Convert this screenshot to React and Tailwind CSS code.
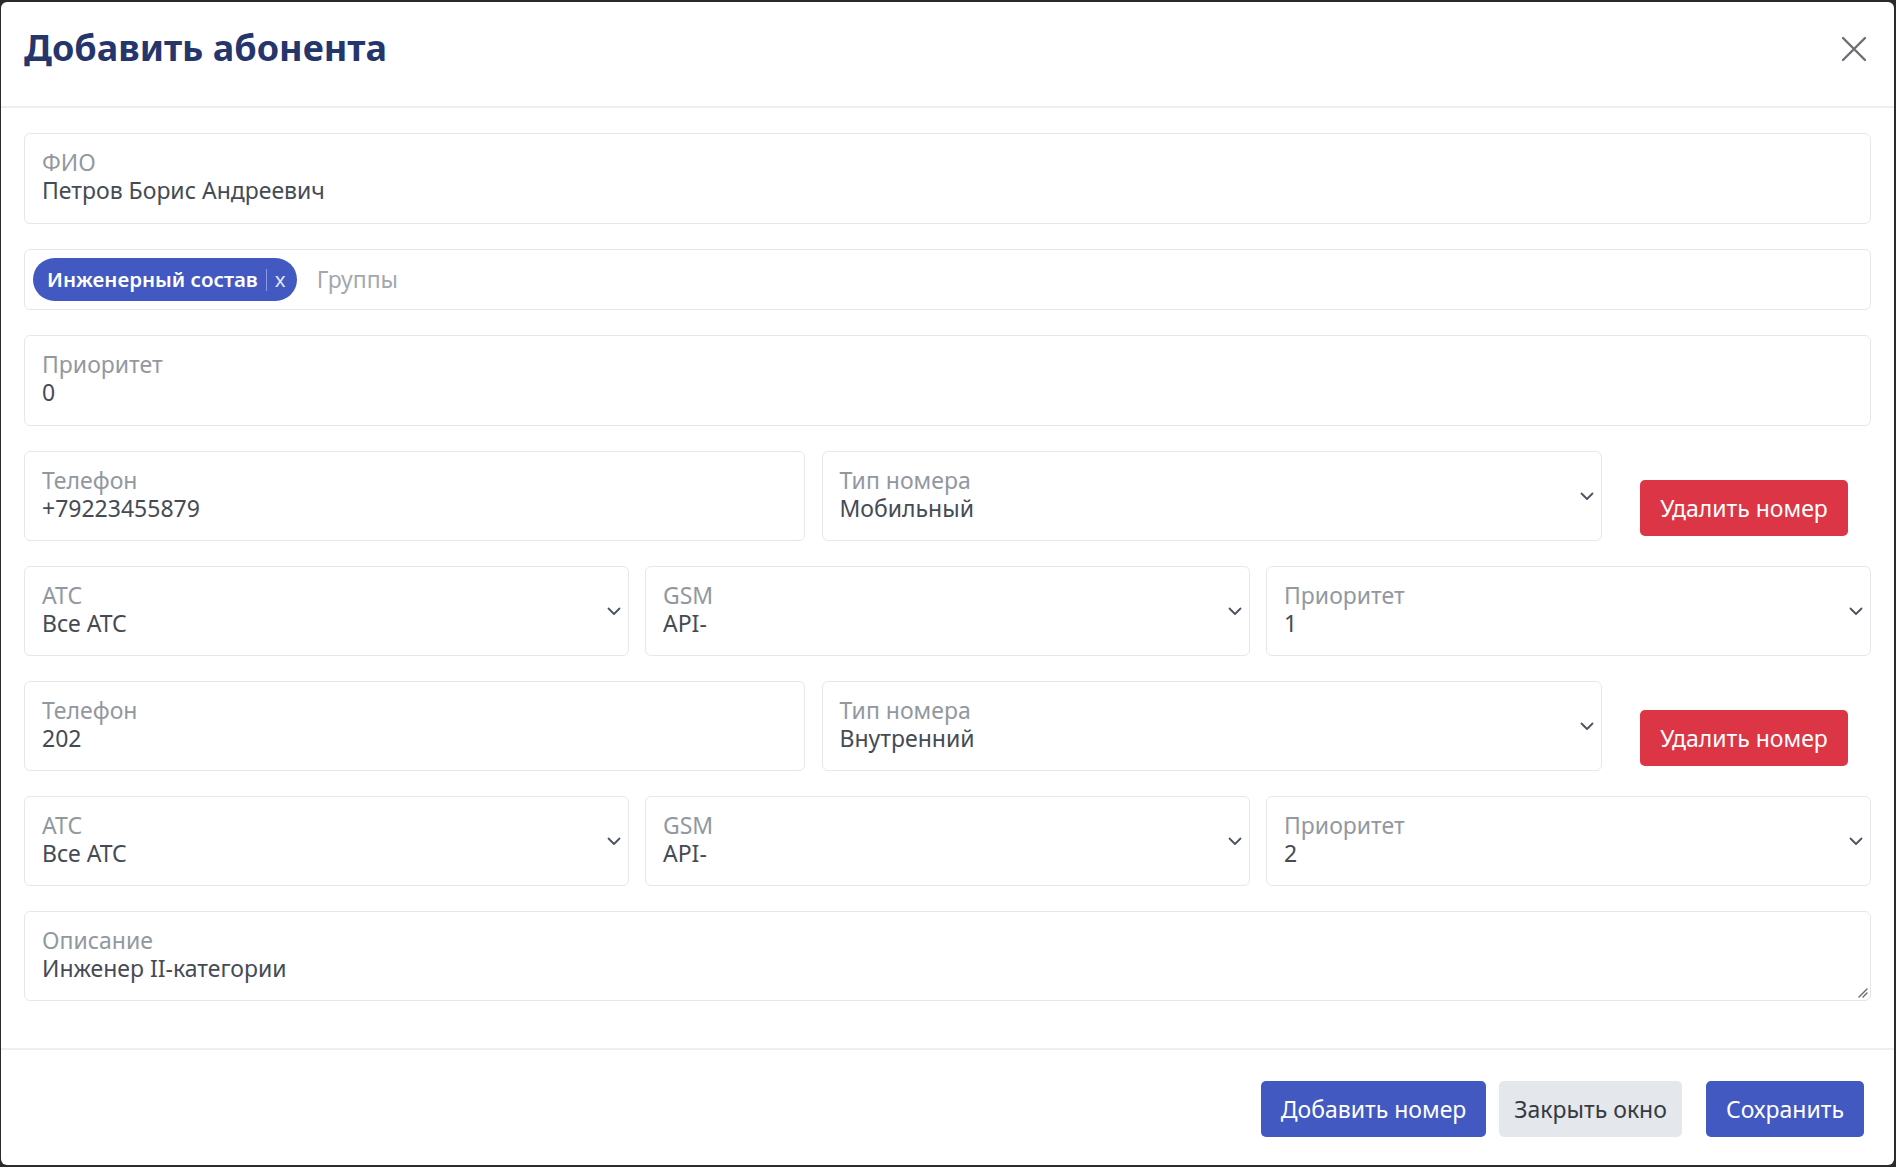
import React from "react";

const font = { fontFamily: '"Noto Sans", "Open Sans", sans-serif' };

function Chevron() {
  return (
    <svg width="14" height="9" viewBox="0 0 14 9" fill="none" className="shrink-0">
      <path d="M1.5 1.5 L7 7 L12.5 1.5" stroke="#4b5260" strokeWidth="1.8" strokeLinecap="round" strokeLinejoin="round" />
    </svg>
  );
}

function Field({ label, value, select = false, className = "h-[90px]" }) {
  return (
    <div className={`relative rounded-[6px] border border-[#e4e8ee] bg-white pl-[17px] pr-[7px] pt-[14px] flex items-start ${className}`}>
      <div className="flex-1 min-w-0 text-[23px] leading-[28px]">
        <div className="text-[#9298a0]">{label}</div>
        <div className="text-[#454b55]">{value}</div>
      </div>
      {select && (
        <div className="self-center -mt-[14px]">
          <Chevron />
        </div>
      )}
    </div>
  );
}

function PhoneBlock({ phone, type, priority }) {
  return (
    <>
      <div className="flex">
        <div className="flex flex-1 gap-[17px]">
          <Field label="Телефон" value={phone} className="h-[90px] flex-1" />
          <Field label="Тип номера" value={type} select className="h-[90px] flex-1" />
        </div>
        <div className="w-[269px] pl-[38px] pt-[29px]">
          <button className="h-[56px] w-[208px] rounded-[5px] bg-[#dc3545] text-[23px] text-white">
            Удалить номер
          </button>
        </div>
      </div>
      <div className="grid grid-cols-3 gap-[16px]">
        <Field label="АТС" value="Все АТС" select />
        <Field label="GSM" value="API-" select />
        <Field label="Приоритет" value={priority} select />
      </div>
    </>
  );
}

export default function App() {
  return (
    <div className="min-h-screen bg-[#2b2b2b] p-[2px] pl-[1px]" style={font}>
      <div className="flex h-[1163px] flex-col rounded-[6px] bg-white">
        {/* Header */}
        <div className="flex h-[106px] items-start justify-between border-b-2 border-[#eceef1] px-[23px] pt-[20px]">
          <h1 className="text-[36px] font-bold leading-[52px] text-[#25366c]">Добавить абонента</h1>
          <button className="mt-[14px] mr-[4px] text-[#6b6f75]">
            <svg width="26" height="26" viewBox="0 0 26 26" fill="none">
              <path d="M2 2 L24 24 M24 2 L2 24" stroke="currentColor" strokeWidth="2.4" strokeLinecap="round" />
            </svg>
          </button>
        </div>

        {/* Body */}
        <div className="flex flex-1 flex-col gap-[25px] border-b-2 border-[#eceef1] px-[23px] pt-[25px]">
          <Field label="ФИО" value="Петров Борис Андреевич" className="h-[91px]" />

          <div className="flex h-[61px] items-center gap-[20px] rounded-[6px] border border-[#e4e8ee] px-[8px]">
            <div className="flex h-[43px] items-center rounded-full bg-[#4259c1] pl-[14px] pr-[11px] text-[20.5px] font-semibold text-white">
              <span>Инженерный состав</span>
              <span className="mx-[8px] h-[22px] w-px bg-[#8d9be0]" />
              <span className="font-normal text-[#e3e7f8]">x</span>
            </div>
            <span className="text-[23px] text-[#a3a8ae]">Группы</span>
          </div>

          <Field label="Приоритет" value="0" className="h-[91px]" />

          <PhoneBlock phone="+79223455879" type="Мобильный" priority="1" />
          <PhoneBlock phone="202" type="Внутренний" priority="2" />

          <div className="relative">
            <Field label="Описание" value="Инженер II-категории" />
            <svg width="12" height="12" viewBox="0 0 12 12" className="absolute bottom-[3px] right-[3px]">
              <path d="M11 3 L3 11 M11 7 L7 11" stroke="#666" strokeWidth="1.3" strokeLinecap="round" />
            </svg>
          </div>
        </div>

        {/* Footer */}
        <div className="flex h-[115px] items-start justify-end pr-[30px] pt-[31px] text-[23px]">
          <button className="h-[56px] rounded-[5px] bg-[#4259c1] px-[20px] text-white">Добавить номер</button>
          <button className="ml-[13px] h-[56px] rounded-[5px] bg-[#e4e7eb] px-[15px] text-[#353a40]">Закрыть окно</button>
          <button className="ml-[24px] h-[56px] rounded-[5px] bg-[#4259c1] px-[20px] text-white">Сохранить</button>
        </div>
      </div>
    </div>
  );
}
